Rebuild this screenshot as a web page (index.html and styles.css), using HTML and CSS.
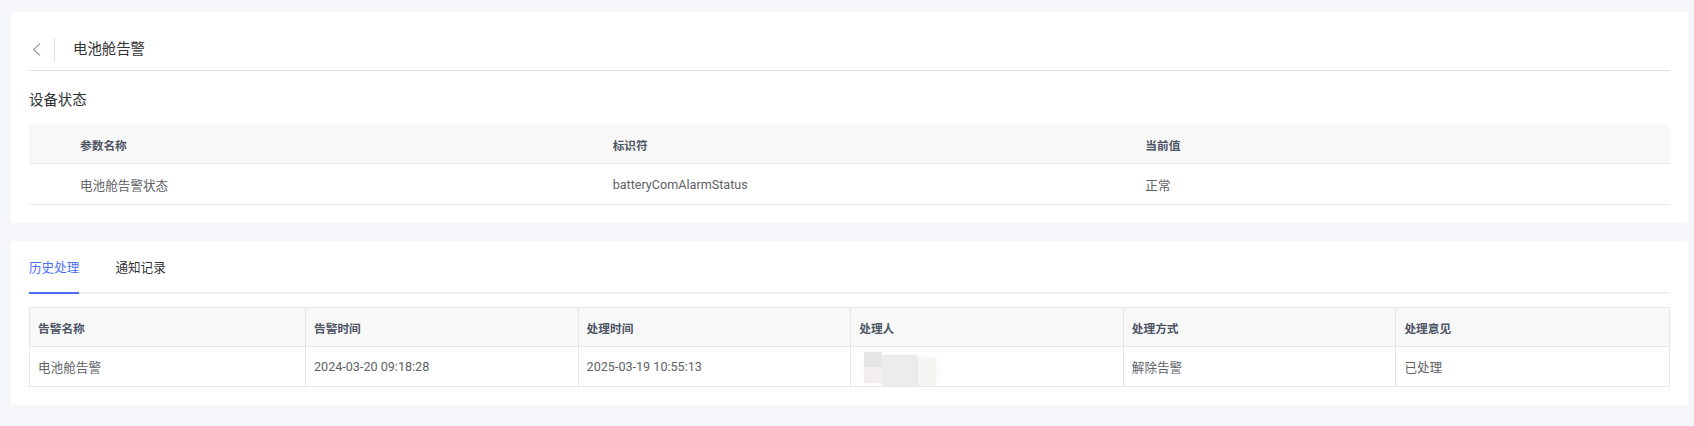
FILE: index.html
```html
<!DOCTYPE html>
<html lang="zh-CN">
<head>
<meta charset="utf-8">
<title>电池舱告警</title>
<link rel="stylesheet" href="styles.css">
</head>
<body>
<div class="page">
  <section class="card card-status">
    <div class="page-header">
      <span class="back">
        <svg width="15" height="24" viewBox="0 0 15 24"><polyline points="11,5.5 4.5,11.5 11,17.5" fill="none" stroke="#9a9a9a" stroke-width="1.1"/></svg>
      </span>
      <span class="vdivider"></span>
      <span class="page-title">电池舱告警</span>
    </div>
    <div class="section-title">设备状态</div>
    <div class="ptable">
      <div class="prow phead">
        <div class="pcell"></div>
        <div class="pcell">参数名称</div>
        <div class="pcell">标识符</div>
        <div class="pcell">当前值</div>
      </div>
      <div class="prow pbody">
        <div class="pcell"></div>
        <div class="pcell">电池舱告警状态</div>
        <div class="pcell">batteryComAlarmStatus</div>
        <div class="pcell">正常</div>
      </div>
    </div>
  </section>

  <section class="card card-history">
    <div class="tabs">
      <div class="tab active">历史处理</div>
      <div class="tab">通知记录</div>
    </div>
    <div class="htable">
      <div class="hrow hhead">
        <div class="hcell">告警名称</div>
        <div class="hcell">告警时间</div>
        <div class="hcell">处理时间</div>
        <div class="hcell">处理人</div>
        <div class="hcell">处理方式</div>
        <div class="hcell">处理意见</div>
      </div>
      <div class="hrow hbody">
        <div class="hcell">电池舱告警</div>
        <div class="hcell">2024-03-20 09:18:28</div>
        <div class="hcell">2025-03-19 10:55:13</div>
        <div class="hcell cell-redacted">
          <svg class="redact" width="80" height="34" viewBox="0 0 80 34">
            <rect x="0" y="2" width="80" height="32" rx="14" fill="#fbfbfb"/>
            <rect x="3" y="0" width="18" height="15" fill="#e6e6e8"/>
            <rect x="3" y="15" width="18" height="16" fill="#f2eeee"/>
            <rect x="21" y="3" width="36" height="31" fill="#ececef"/>
            <rect x="57" y="6" width="18" height="28" fill="#f5f5f4"/>
          </svg>
        </div>
        <div class="hcell">解除告警</div>
        <div class="hcell">已处理</div>
      </div>
    </div>
  </section>
</div>
</body>
</html>
```

FILE: styles.css
```css
* { box-sizing: border-box; }

html, body {
  margin: 0;
  padding: 0;
  background: #f5f6fa;
}

body {
  font-family: "Roboto", "Noto Sans CJK SC", sans-serif;
  color: #333;
}

.page {
  padding: 12px 6px 0 11px;
}

.card {
  background: #fff;
  border-radius: 3px;
}

.card-status {
  padding: 26px 18px 18px;
}

.card-history {
  margin-top: 18px;
  padding: 18px 18px 18px;
}

.page-header {
  display: flex;
  align-items: center;
  height: 33px;
  padding-bottom: 9px;
  border-bottom: 1px solid #dcdfe6;
}

.back {
  display: flex;
  width: 15px;
  height: 24px;
  margin-right: 10px;
}

.vdivider {
  width: 1px;
  height: 24px;
  background: #dfe1e6;
}

.page-title {
  margin-left: 18px;
  font-size: 14.4px;
  line-height: 24px;
  color: #333;
}

.section-title {
  margin: 20px 0 14px;
  font-size: 14.4px;
  line-height: 20px;
  color: #303133;
}

.prow {
  display: grid;
  grid-template-columns: 43px 1fr 1fr 1fr;
  align-items: center;
  border-bottom: 1px solid #e8e8e8;
}

.phead {
  height: 39px;
  background: #f8f8f8;
  font-size: 11.7px;
  font-weight: 700;
  color: #4e5565;
}

.pbody {
  height: 41px;
  font-size: 12.6px;
  color: #606266;
}

.pcell {
  padding-left: 8px;
  white-space: nowrap;
}

.tabs {
  display: flex;
  gap: 36px;
  border-bottom: 2px solid #eef0f6;
}

.tab {
  font-size: 12.6px;
  line-height: 18px;
  padding-bottom: 15px;
  color: #333;
}

.tab.active {
  color: #4b6ef5;
  border-bottom: 2px solid #4b6ef5;
  margin-bottom: -2px;
}

.htable {
  margin-top: 13px;
  border: 1px solid #e6e6e6;
}

.hrow {
  display: grid;
  grid-template-columns: 276px repeat(5, 1fr);
}

.hhead {
  height: 39px;
  background: #f8f8f8;
  border-bottom: 1px solid #e6e6e6;
  font-size: 11.7px;
  font-weight: 700;
  color: #4e5565;
}

.hbody {
  height: 39px;
  font-size: 12.6px;
  color: #606266;
}

.hcell {
  display: flex;
  align-items: center;
  padding-left: 8px;
  border-right: 1px solid #e6e6e6;
  white-space: nowrap;
}

.hcell:last-child {
  border-right: none;
}

.cell-redacted {
  align-items: flex-end;
}

.redact {
  display: block;
  margin-left: 2px;
}
```
